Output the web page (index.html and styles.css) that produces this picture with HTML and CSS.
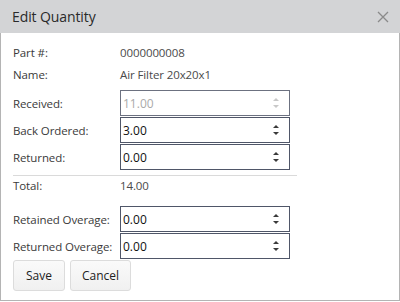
FILE: index.html
```html
<!DOCTYPE html>
<html>
<head>
<meta charset="utf-8">
<link rel="stylesheet" href="styles.css">
</head>
<body>
<div class="dialog">
  <div class="titlebar">
    <span class="title">Edit Quantity</span>
    <svg class="close" width="12" height="12" viewBox="0 0 12 12"><path d="M1 1L11 11M11 1L1 11" stroke="#8a8a8a" stroke-width="1.3" fill="none"/></svg>
  </div>
  <div class="content">
    <div class="row text"><span class="label">Part #:</span><span class="value">0000000008</span></div>
    <div class="row text"><span class="label">Name:</span><span class="value">Air Filter 20x20x1</span></div>
    <div class="group first">
      <div class="row field"><span class="label">Received:</span>
        <div class="numeric disabled"><input type="text" value="11.00" disabled><span class="spin"><i class="up"></i><i class="down"></i></span></div></div>
      <div class="row field"><span class="label">Back Ordered:</span>
        <div class="numeric"><input type="text" value="3.00"><span class="spin"><i class="up"></i><i class="down"></i></span></div></div>
      <div class="row field"><span class="label">Returned:</span>
        <div class="numeric"><input type="text" value="0.00"><span class="spin"><i class="up"></i><i class="down"></i></span></div></div>
    </div>
    <div class="separator"></div>
    <div class="row total"><span class="label">Total:</span><span class="value">14.00</span></div>
    <div class="group second">
      <div class="row field"><span class="label">Retained Overage:</span>
        <div class="numeric"><input type="text" value="0.00"><span class="spin"><i class="up"></i><i class="down"></i></span></div></div>
      <div class="row field"><span class="label">Returned Overage:</span>
        <div class="numeric"><input type="text" value="0.00"><span class="spin"><i class="up"></i><i class="down"></i></span></div></div>
    </div>
    <div class="buttons">
      <button class="btn save">Save</button>
      <button class="btn cancel">Cancel</button>
    </div>
  </div>
</div>
</body>
</html>
```
FILE: styles.css
```css
* { box-sizing: border-box; }
html, body { margin: 0; padding: 0; background: #fff; }
body {
  font-family: "Open Sans", "Noto Sans", sans-serif;
  font-size: 11.5px;
  color: #333;
}
.dialog {
  width: 400px;
  height: 301px;
  border: 1px solid #b4b4b4;
  border-top: none;
  display: flex;
  flex-direction: column;
}
.titlebar {
  height: 33px;
  background: #d3d4d6;
  display: flex;
  align-items: center;
  justify-content: space-between;
  padding: 0 11px 0 12px;
  margin: 0 -1px;
}
.title {
  font-size: 14px;
  color: #2a2a2a;
  letter-spacing: -0.1px;
}
.close { display: block; }
.content {
  padding: 8px 0 0 12px;
  display: flex;
  flex-direction: column;
}
.row {
  display: flex;
  align-items: center;
}
.row.text { height: 22px; }
.label {
  width: 107px;
  flex: none;
  color: #3a3a3a;
  letter-spacing: -0.1px;
}
.value { color: #4a4a4a; letter-spacing: -0.1px; }
.group.first { margin-top: 5px; }
.group.second { margin-top: 11px; }
.row.field { height: 26px; margin-bottom: 1px; }
.numeric {
  width: 170px;
  height: 26px;
  border: 1px solid #4f5668;
  display: flex;
  align-items: center;
  background: #fff;
}
.numeric input {
  flex: 1;
  min-width: 0;
  border: none;
  outline: none;
  background: transparent;
  font-family: "Open Sans", "Noto Sans", sans-serif;
  font-size: 12px;
  color: #111;
  padding: 0 0 0 2px;
  height: 24px;
}
.numeric.disabled input { color: #aaa; }
.numeric.disabled { border-color: #6c7180; }
.spin {
  width: 22px;
  flex: none;
  display: flex;
  flex-direction: column;
  align-items: center;
  gap: 4px;
  margin-right: 2px;
}
.spin i {
  display: block;
  width: 0;
  height: 0;
  border-left: 3.5px solid transparent;
  border-right: 3.5px solid transparent;
}
.spin .up { border-bottom: 3.5px solid #3a3a3a; }
.spin .down { border-top: 3.5px solid #3a3a3a; }
.disabled .spin .up { border-bottom-color: #c8c8c8; }
.disabled .spin .down { border-top-color: #c8c8c8; }
.separator {
  width: 284px;
  height: 1px;
  background: #dadada;
  margin-top: 4px;
}
.row.total { height: 19px; }
.buttons {
  display: flex;
  gap: 5px;
  margin-top: 0;
}
.btn {
  height: 31px;
  border: 1px solid #dcdcdc;
  border-radius: 3px;
  background: linear-gradient(#fafafa, #f0f0f0);
  font-family: "Open Sans", "Noto Sans", sans-serif;
  font-size: 12px;
  color: #222;
  padding: 0;
}
.btn.save { width: 52px; }
.btn.cancel { width: 61px; }
```
